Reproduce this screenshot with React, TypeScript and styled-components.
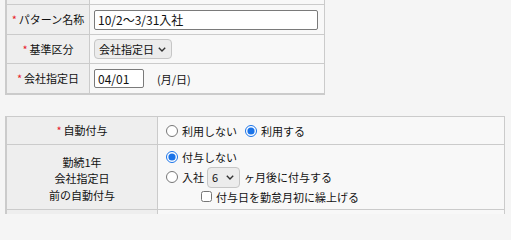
import React from "react";
import styled, { createGlobalStyle } from "styled-components";

const GlobalStyle = createGlobalStyle`
  html, body {
    margin: 0;
    padding: 0;
    background: #f5f5f5;
    overflow: hidden;
  }
  body {
    font-family: "Noto Sans CJK JP", "Noto Sans", sans-serif;
    font-size: 11px;
    color: #111;
  }
  * {
    box-sizing: border-box;
  }
`;

const Page = styled.div`
  display: flex;
  flex-direction: column;
  gap: 21px;
  padding-left: 5px;
  margin-top: -26px;
`;

const FormTable = styled.div<{ $label: number; $width: number; $top?: boolean; $bottom?: boolean }>`
  display: grid;
  grid-template-columns: ${(p) => p.$label}px 1fr;
  width: ${(p) => p.$width}px;
  border-left: 2px solid #cbcbcb;
  border-right: 1px solid #cbcbcb;
  border-top: ${(p) => (p.$top ? "1px solid #cbcbcb" : "none")};
  border-bottom: ${(p) => (p.$bottom ? "1px solid #cbcbcb" : "none")};
`;

const LabelCell = styled.div<{ $h: number; $last?: boolean }>`
  height: ${(p) => p.$h}px;
  background: #eeeeee;
  border-right: 1px solid #cbcbcb;
  border-bottom: ${(p) => (p.$last ? "none" : "1px solid #cbcbcb")};
  display: flex;
  align-items: center;
  justify-content: center;
  text-align: center;
  line-height: 16.5px;
`;

const MultiLabel = styled(LabelCell)`
  padding-top: 3px;
`;

const ValueCell = styled.div<{ $h: number; $last?: boolean; $pad?: number }>`
  height: ${(p) => p.$h}px;
  background: #f8f8f8;
  border-bottom: ${(p) => (p.$last ? "none" : "1px solid #cbcbcb")};
  display: flex;
  align-items: center;
  padding: 0 4px 0 ${(p) => p.$pad ?? 4}px;
`;

const OptionCell = styled(ValueCell)`
  flex-direction: column;
  align-items: flex-start;
  justify-content: center;
  padding: 1px 8px 2px 8px;
`;

const Required = styled.span`
  color: #e8202a;
  margin-right: 2px;
`;

const TextInput = styled.input<{ $w: number; $h?: number }>`
  width: ${(p) => p.$w}px;
  height: ${(p) => p.$h || 20}px;
  border: 1px solid #7a7a7a;
  border-radius: 2px;
  background: #fff;
  padding: 0 3px;
  font: inherit;
  font-size: 12px;
  color: #111;
  outline: none;
`;

const Hint = styled.span`
  margin-left: 13px;
`;

const SelectBox = styled.label<{ $w: number; $h: number }>`
  display: inline-flex;
  align-items: center;
  width: ${(p) => p.$w}px;
  height: ${(p) => p.$h}px;
  padding: 0 5px 0 4px;
  border: 1px solid #c6c6c6;
  border-radius: 4px;
  background: #ececec;

  select {
    appearance: none;
    flex: 1;
    min-width: 0;
    border: none;
    background: transparent;
    font: inherit;
    color: #111;
    padding: 0;
    outline: none;
  }
  svg {
    flex: none;
  }
`;

const Line = styled.div<{ $h: number; $indent?: number }>`
  display: flex;
  align-items: center;
  height: ${(p) => p.$h}px;
  padding-left: ${(p) => p.$indent || 0}px;
  white-space: nowrap;
`;

const Radio = styled.input.attrs({ type: "radio" })`
  width: 12px;
  height: 12px;
  margin: 0 4px 0 0;
  accent-color: #1a73e8;
`;

const Check = styled.input.attrs({ type: "checkbox" })`
  width: 11px;
  height: 11px;
  margin: 0 4px 0 0;
`;

const Choice = styled.label<{ $gap?: number }>`
  display: inline-flex;
  align-items: center;
  margin-right: ${(p) => p.$gap ?? 8}px;
`;

const Unit = styled.span`
  margin-left: 4px;
`;

const Chevron = () => (
  <svg width="8" height="5" viewBox="0 0 8 5">
    <path d="M0.8 0.8 L4 4 L7.2 0.8" fill="none" stroke="#333" strokeWidth="1.4" />
  </svg>
);

export default function App() {
  return (
    <>
      <GlobalStyle />
      <Page>
        <FormTable $label={83} $width={320} $bottom>
          <LabelCell $h={31} />
          <ValueCell $h={31} />

          <LabelCell $h={30}>
            <Required>*</Required>パターン名称
          </LabelCell>
          <ValueCell $h={30}>
            <TextInput $w={224} defaultValue="10/2～3/31入社" />
          </ValueCell>

          <LabelCell $h={29}>
            <Required>*</Required>基準区分
          </LabelCell>
          <ValueCell $h={29}>
            <SelectBox $w={78} $h={20}>
              <select defaultValue="company">
                <option value="company">会社指定日</option>
                <option value="join">入社日</option>
              </select>
              <Chevron />
            </SelectBox>
          </ValueCell>

          <LabelCell $h={30}>
            <Required>*</Required>会社指定日
          </LabelCell>
          <ValueCell $h={30}>
            <TextInput $w={50} $h={19} defaultValue="04/01" />
            <Hint>(月/日)</Hint>
          </ValueCell>
        </FormTable>

        <FormTable $label={151} $width={500} $top>
          <LabelCell $h={28}>
            <Required>*</Required>自動付与
          </LabelCell>
          <ValueCell $h={28} $pad={8}>
            <Choice>
              <Radio name="auto" />
              利用しない
            </Choice>
            <Choice>
              <Radio name="auto" defaultChecked />
              利用する
            </Choice>
          </ValueCell>

          <MultiLabel $h={65}>
            勤続1年
            <br />
            会社指定日
            <br />
            前の自動付与
          </MultiLabel>
          <OptionCell $h={65}>
            <Line $h={19}>
              <Choice>
                <Radio name="before" defaultChecked />
                付与しない
              </Choice>
            </Line>
            <Line $h={21}>
              <Choice $gap={3}>
                <Radio name="before" />
                入社
              </Choice>
              <SelectBox $w={33} $h={21}>
                <select defaultValue="6">
                  {Array.from({ length: 12 }, (_, i) => (
                    <option key={i} value={String(i + 1)}>
                      {i + 1}
                    </option>
                  ))}
                </select>
                <Chevron />
              </SelectBox>
              <Unit>ヶ月後に付与する</Unit>
            </Line>
            <Line $h={18} $indent={35}>
              <Check />
              付与日を勤怠月初に繰上げる
            </Line>
          </OptionCell>

          <LabelCell $h={4} $last />
          <ValueCell $h={4} $last />
        </FormTable>
      </Page>
    </>
  );
}
